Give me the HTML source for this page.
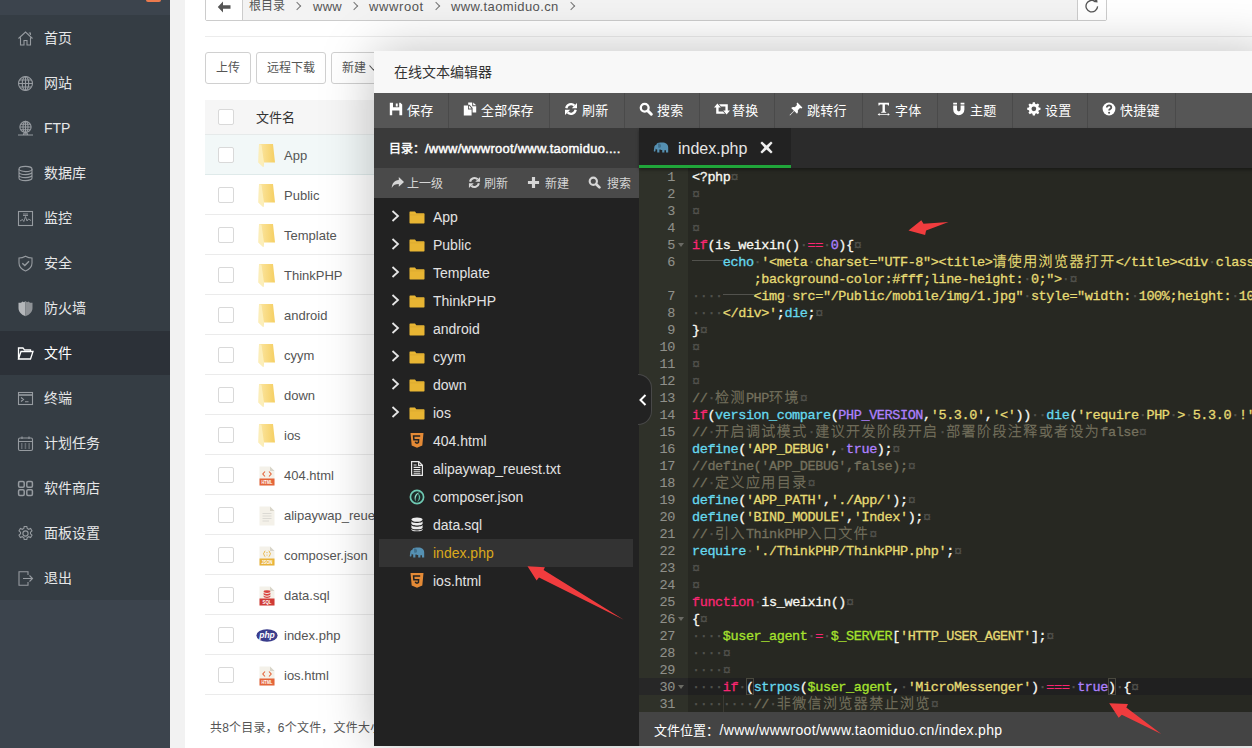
<!DOCTYPE html>
<html lang="zh-CN">
<head>
<meta charset="utf-8">
<title>文件管理</title>
<style>
*{box-sizing:border-box;margin:0;padding:0}
html,body{width:1252px;height:748px;overflow:hidden;background:#fff}
body{position:relative;font-family:"Liberation Sans","Noto Sans CJK SC",sans-serif;font-size:12px;color:#444}
.abs{position:absolute}
/* sidebar */
#side{position:absolute;left:0;top:0;width:170px;height:748px;background:#3c444d}
#side .hd{position:absolute;left:0;top:0;width:170px;height:15px;background:#3c444d}
#side .badge{position:absolute;left:146px;top:-4px;width:15px;height:6px;background:#ec7a4d;border-radius:2px}
#menu{position:absolute;left:0;top:15px;width:170px;height:585px;background:#353d44}
#menu .it{position:absolute;left:0;width:170px;height:45px;line-height:46px;color:#e6e7e8;font-size:14px;padding-left:44px;white-space:nowrap}
#menu .it.on{background:#2c3138;color:#fff;box-shadow:inset 0 1px 0 #353d44}
#menu .it svg{position:absolute;left:17px;top:15px;width:17px;height:17px;stroke:#969ba0;fill:none;stroke-width:1.1}
/* main */
#gap{position:absolute;left:170px;top:0;width:15px;height:748px;background:#f2f2f2}
#main{position:absolute;left:185px;top:0;width:1067px;height:748px;background:#fff}

































/*MAINCSS*/
.crumb{position:absolute;left:20px;top:-10px;width:902px;height:31px;border:1px solid #ccc;background:#f3f3f3;border-radius:2px}
.crumb .back{position:absolute;left:0;top:0;width:37px;height:29px;background:#fff;border-right:1px solid #ccc}
.crumb .back svg{position:absolute;left:11px;top:10px}
.crumb .path{position:absolute;left:0;top:0;height:29px;line-height:31px;font-size:12px;color:#555;white-space:nowrap}
.crumb .path span{position:absolute;top:0;font-size:13px}
.crumb .path span:first-child{font-size:12px}
.crumb .path i{position:absolute;width:6px;height:6px;border-top:1.3px solid #777;border-right:1.3px solid #777;transform:rotate(45deg);top:12px}
.crumb .ref{position:absolute;right:0;top:0;width:29px;height:29px;background:#fff;border-left:1px solid #ccc}
.crumb .ref svg{position:absolute;left:5px;top:6px}
.hr{position:absolute;left:20px;top:36px;width:1047px;height:1px;background:#ececec}
.btn{position:absolute;top:52px;height:32px;line-height:30px;border:1px solid #d0d0d0;border-radius:3px;background:#fff;color:#555;font-size:12px;text-align:center;white-space:nowrap}
.thead{position:absolute;left:20px;top:100px;width:1047px;height:35px;background:#f6f6f6;border-bottom:1px solid #e6eaea}
.thead .th{position:absolute;left:51px;top:0;line-height:35px;font-size:13px;color:#333}
.cb{position:absolute;left:13px;width:16px;height:16px;border:1px solid #d9d9d9;border-radius:2px;background:#fff}
.tr{position:absolute;left:20px;width:1047px;height:40px;border-bottom:1px solid #ebebeb}
.tr.hl{background:#f2f8f8;border-bottom-color:#dfeaea}
.tr .fi{position:absolute}
.tr .fn{position:absolute;left:79px;top:0;line-height:42px;font-size:13px;color:#555;white-space:nowrap}
.foot{position:absolute;left:25px;top:718px;line-height:21px;font-size:12px;letter-spacing:0.2px;color:#555;white-space:nowrap}
/*/MAINCSS*/



/*MODALCSS*/
#modal{position:absolute;left:374px;top:51px;width:900px;height:695px;background:#222;box-shadow:1px 1px 50px rgba(0,0,0,.26)}
#modal .ttl{position:absolute;left:0;top:0;width:900px;height:42px;background:#f8f8f8;line-height:42px;padding-left:20px;font-size:14px;color:#333}
.tbar{position:absolute;left:0;top:42px;width:900px;height:35px;background:#565656}
.tb{position:absolute;top:0;height:35px;border-right:1px solid #4a4a4a;color:#fff;font-size:13px;line-height:36px;white-space:nowrap}
.tb .gi{position:absolute;left:15px;top:9px}
.tb span{position:absolute;left:33px;top:0;letter-spacing:0.2px}
.lp{position:absolute;left:0;top:77px;width:265px;height:618px;background:#222}
.lp .dir{position:absolute;left:0;top:0;width:265px;height:40px;background:#3a3a3a;color:#fff;font-size:13px;line-height:42px;padding-left:15px;white-space:nowrap;font-weight:normal;-webkit-text-stroke:0.45px;letter-spacing:0.24px}
.lp .dir b{font-weight:normal;font-size:12px;letter-spacing:0;display:inline-block;width:36px;vertical-align:top}
.lp .sub{position:absolute;left:0;top:40px;width:265px;height:30px;background:#4a4a4a}
.sb{position:absolute;top:0;height:30px;line-height:33px;color:#d6d6d6;font-size:12px;white-space:nowrap}
.sb .gi{position:absolute;left:0;top:8px}
.sb span{position:absolute;left:16px;top:0}
.tree{position:absolute;left:0;top:70px;width:265px;height:547px}
.tn{position:absolute;left:5px;width:254px;height:28px;line-height:28px;color:#e2e2e2;font-size:14px;white-space:nowrap}
.tn.sel{background:#333;color:#dba91c}
.tn .ch{position:absolute;left:12px;top:7px}
.tn .ti{position:absolute;left:30px;top:8px}
.tn span{position:absolute;left:54px;top:0}
.tabs{position:absolute;left:265px;top:77px;width:635px;height:40px;background:#2b2b2b;box-shadow:0 2px 3px rgba(0,0,0,.35);z-index:3}
.tab{position:absolute;left:0;top:0;width:152px;height:40px;background:#222;border-bottom:3px solid #20a53a;color:#e6e6e6;font-size:15px;line-height:42px;white-space:nowrap}
.tab .te{position:absolute;left:14px;top:14px}
.tab span{position:absolute;left:39px;top:0;font-size:16px}
.tab .tx{position:absolute;left:121px;top:13px}
.handle{position:absolute;left:264px;top:323px;width:14px;height:51px;background:#222;border:1px solid #484848;border-left:none;border-radius:0 14px 14px 0;z-index:5}
.handle svg{position:absolute;left:1px;top:19px}
.status{position:absolute;left:265px;top:661px;width:635px;height:34px;background:#444;color:#fff;font-size:14px;line-height:36px;padding-left:15px;white-space:nowrap;z-index:4;letter-spacing:0.32px}
.status b{font-weight:normal;font-size:13px;letter-spacing:0;display:inline-block;width:65.5px}
/*/MODALCSS*/


/*EDCSS*/
.ed{position:absolute;left:265px;top:117px;width:635px;height:544px;background:#272822;overflow:hidden;font-family:"Liberation Mono","Noto Sans CJK SC",monospace;font-size:13.5px;line-height:17px;letter-spacing:-0.4px;color:#f8f8f2;-webkit-text-stroke:0.3px}
.gut{position:absolute;left:0;top:0;width:49px;height:544px;background:#2f3129;color:#8f908a}
.gl{position:relative;height:17px;line-height:19px;text-align:right;padding-right:13px;letter-spacing:-0.4px;font-size:13.5px;-webkit-text-stroke:0.1px}
.gl.act{background:#272727}
.gl em{position:absolute;right:4px;top:7px;width:0;height:0;border-left:3px solid transparent;border-right:3px solid transparent;border-top:4px solid #6a6a64}
.code{position:absolute;left:49px;top:0;width:586px;height:544px}
.code .ln span,.code .ln i,.code .ln b{position:relative;top:1px}
.ln{height:17px;padding-left:4px;white-space:pre}
.ln.act{background:#202020}
.ln i{font-style:normal;color:#52524d}
.ln u{display:inline-block;width:30.8px;height:1px;background:#52524d;vertical-align:4px;text-decoration:none}
.ln b{line-height:0;font-weight:300;font-size:14px;letter-spacing:1.4px;font-family:"Liberation Mono","Noto Sans CJK SC",monospace}
.w{color:#f8f8f2}.k{color:#f92672}.f{color:#66d9ef}.s{color:#e6db74}.n{color:#ae81ff}.v{color:#a6e22e}.c{color:#75715e}
.bk{position:absolute;width:8.2px;height:17px;border:1px solid #49483e}
.ig{position:absolute;width:1px;height:17px;background:#3b3a32}
/*/EDCSS*/
</style>
</head>
<body>
<div id="side">
<div class="hd"><div class="badge"></div></div>
<div id="menu">
<!--MENU-->
<div class="it" style="top:0px"><svg viewBox="0 0 17 17"><path d="M1.5 8.5 L8.5 2 L15.5 8.5 M3.5 7.5 V15 H7 V10.5 H10 V15 H13.5 V7.5 M11.8 3 h1.6 v2"/></svg>首页</div>
<div class="it" style="top:45px"><svg viewBox="0 0 17 17"><circle cx="8.5" cy="8.5" r="7"/><ellipse cx="8.5" cy="8.5" rx="3.2" ry="7"/><path d="M8.5 1.5 V15.5 M1.5 8.5 H15.5 M2.5 5 H14.5 M2.5 12 H14.5"/></svg>网站</div>
<div class="it" style="top:90px"><svg viewBox="0 0 17 17"><circle cx="8.5" cy="7" r="5.6"/><ellipse cx="8.5" cy="7" rx="2.5" ry="5.6"/><path d="M8.5 1.4 V12.6 M2.9 7 H14.1 M3.6 4.3 H13.4 M3.6 9.7 H13.4 M1 15 H16 M6.5 15 v-1.2 h4 v1.2"/></svg>FTP</div>
<div class="it" style="top:135px"><svg viewBox="0 0 17 17"><ellipse cx="8.5" cy="4" rx="6.5" ry="2.6"/><path d="M2 4 V13 C2 14.5 5 15.6 8.5 15.6 S15 14.5 15 13 V4 M2 7 C2 8.5 5 9.6 8.5 9.6 S15 8.5 15 7 M2 10 C2 11.5 5 12.6 8.5 12.6 S15 11.5 15 10"/></svg>数据库</div>
<div class="it" style="top:180px"><svg viewBox="0 0 17 17"><rect x="1.5" y="1.5" width="14" height="14"/><path d="M3 11 L5.5 9.5 L6.8 11.5 L8.5 6.5 L10 11 L11.5 9 L14 10.5 M6 4 H11 M6 5.5 H11" stroke-width="0.9"/></svg>监控</div>
<div class="it" style="top:225px"><svg viewBox="0 0 17 17"><path d="M8.5 1.2 C6 2.6 4 3 2 3 V8 C2 12 5 14.6 8.5 16 C12 14.6 15 12 15 8 V3 C13 3 11 2.6 8.5 1.2 Z"/><path d="M5.3 8.3 L7.8 10.6 L12 6.2" stroke-width="1.4"/></svg>安全</div>
<div class="it" style="top:270px"><svg viewBox="0 0 17 17"><path d="M8.5 1 L7 2.2 L5.5 1.4 L4 2.8 L1.5 2.8 V8 C1.5 12 4.5 14.8 8.5 16.2 Z" fill="#b4b7ba" stroke="none"/><path d="M8.5 1 L10 2.2 L11.5 1.4 L13 2.8 L15.5 2.8 V8 C15.5 12 12.5 14.8 8.5 16.2 Z" fill="#8e9296" stroke="none"/></svg>防火墙</div>
<div class="it on" style="top:315px"><svg viewBox="0 0 17 17"><path d="M1.5 14 V3 H6 L7.5 4.8 H13.5 V6.5 M1.5 14 L4 6.5 H16 L13.5 14 Z" stroke="#fff" stroke-width="1.3"/></svg>文件</div>
<div class="it" style="top:360px"><svg viewBox="0 0 17 17"><rect x="1.5" y="2.5" width="14" height="12"/><path d="M1.5 5 H15.5" stroke-width="1.6"/><path d="M4 7.5 L6.5 9.5 L4 11.5 M8 11.8 H11.5"/></svg>终端</div>
<div class="it" style="top:405px"><svg viewBox="0 0 17 17"><rect x="1.5" y="3" width="14" height="12.5" rx="1.5"/><path d="M1.5 6.5 H15.5 M5 1.5 V4 M12 1.5 V4"/><path d="M4 9 h1.5 M7.7 9 h1.5 M11.4 9 h1.5 M4 11 h1.5 M7.7 11 h1.5 M11.4 11 h1.5 M4 13 h1.5 M7.7 13 h1.5 M11.4 13 h1.5" stroke-width="1"/></svg>计划任务</div>
<div class="it" style="top:450px"><svg viewBox="0 0 17 17"><rect x="1.6" y="1.6" width="5.6" height="5.6" rx="1.2" stroke-width="1.5"/><rect x="9.8" y="1.6" width="5.6" height="5.6" rx="1.2" stroke-width="1.5"/><rect x="1.6" y="9.8" width="5.6" height="5.6" rx="1.2" stroke-width="1.5"/><rect x="9.8" y="9.8" width="5.6" height="5.6" rx="1.2" stroke-width="1.5"/></svg>软件商店</div>
<div class="it" style="top:495px"><svg viewBox="0 0 17 17"><circle cx="8.5" cy="8.5" r="2.6"/><path d="M7.2 1.5 h2.6 l0.4 2 l1.5 0.8 l1.9 -0.8 l1.4 2.3 l-1.5 1.4 v1.6 l1.5 1.4 l-1.4 2.3 l-1.9 -0.8 l-1.5 0.8 l-0.4 2 h-2.6 l-0.4 -2 l-1.5 -0.8 l-1.9 0.8 l-1.4 -2.3 l1.5 -1.4 v-1.6 l-1.5 -1.4 l1.4 -2.3 l1.9 0.8 l1.5 -0.8 Z"/></svg>面板设置</div>
<div class="it" style="top:540px"><svg viewBox="0 0 17 17"><path d="M11 5 V1.8 H2 V15.2 H11 V12 M6 8.5 H15.5 M12.5 5.5 L15.5 8.5 L12.5 11.5"/></svg>退出</div>
<!--/MENU-->
</div>
</div>
<div id="gap"></div>
<div id="main">
<!--MAIN-->
<div class="crumb"><div class="back"><svg width="14" height="12" viewBox="0 0 14 12"><path d="M6 0.5 L0.8 6 L6 11.5 V7.8 H13.5 V4.2 H6 Z" fill="#555"/></svg></div><div class="path"><span style="left:43px">根目录</span><i style="left:88px"></i><span style="left:107px;letter-spacing:0.25px">www</span><i style="left:145px"></i><span style="left:163px;letter-spacing:0.6px">wwwroot</span><i style="left:227px"></i><span style="left:245px;letter-spacing:0.39px">www.taomiduo.cn</span><i style="left:362px"></i></div><div class="ref"><svg width="18" height="18" viewBox="0 0 18 18"><path d="M14.6 9.4 A5.8 5.8 0 1 1 12.4 4.6" fill="none" stroke="#555" stroke-width="1.3"/><path d="M10.2 4.9 L14.6 5.6 L14 1.2 Z" fill="#555"/></svg></div></div>
<div class="hr"></div>
<div class="btn" style="left:20px;width:46px">上传</div><div class="btn" style="left:71px;width:70px">远程下载</div><div class="btn" style="left:146px;width:90px;text-align:left;padding-left:10px">新建<svg width="9" height="6" viewBox="0 0 9 6" style="margin-left:3px;vertical-align:1px"><path d="M0.5 0.5 L4.5 5 L8.5 0.5" fill="none" stroke="#555" stroke-width="1.1"/></svg></div>
<div class="thead"><span class="cb" style="top:9px"></span><span class="th">文件名</span></div>
<div class="tr hl" style="top:135px"><span class="cb" style="top:12px"></span><svg class="fi" style="left:53px;top:9px" width="17" height="23" viewBox="0 0 17 23"><defs><linearGradient id="fg0" x1="0" y1="0" x2="1" y2="0"><stop offset="0" stop-color="#fbe7a6"/><stop offset="0.45" stop-color="#f9dc86"/><stop offset="1" stop-color="#f5cf63"/></linearGradient></defs><path d="M1 0 H15 L17 18.5 H6 L5.3 23 L0.5 18.5 Z" fill="url(#fg0)"/><path d="M1 0 L3.5 1 L6 18.5 L5.3 23 L0.5 18.5 Z" fill="#fceeb9"/></svg><span class="fn">App</span></div>
<div class="tr" style="top:175px"><span class="cb" style="top:12px"></span><svg class="fi" style="left:53px;top:9px" width="17" height="23" viewBox="0 0 17 23"><defs><linearGradient id="fg1" x1="0" y1="0" x2="1" y2="0"><stop offset="0" stop-color="#fbe7a6"/><stop offset="0.45" stop-color="#f9dc86"/><stop offset="1" stop-color="#f5cf63"/></linearGradient></defs><path d="M1 0 H15 L17 18.5 H6 L5.3 23 L0.5 18.5 Z" fill="url(#fg1)"/><path d="M1 0 L3.5 1 L6 18.5 L5.3 23 L0.5 18.5 Z" fill="#fceeb9"/></svg><span class="fn">Public</span></div>
<div class="tr" style="top:215px"><span class="cb" style="top:12px"></span><svg class="fi" style="left:53px;top:9px" width="17" height="23" viewBox="0 0 17 23"><defs><linearGradient id="fg2" x1="0" y1="0" x2="1" y2="0"><stop offset="0" stop-color="#fbe7a6"/><stop offset="0.45" stop-color="#f9dc86"/><stop offset="1" stop-color="#f5cf63"/></linearGradient></defs><path d="M1 0 H15 L17 18.5 H6 L5.3 23 L0.5 18.5 Z" fill="url(#fg2)"/><path d="M1 0 L3.5 1 L6 18.5 L5.3 23 L0.5 18.5 Z" fill="#fceeb9"/></svg><span class="fn">Template</span></div>
<div class="tr" style="top:255px"><span class="cb" style="top:12px"></span><svg class="fi" style="left:53px;top:9px" width="17" height="23" viewBox="0 0 17 23"><defs><linearGradient id="fg3" x1="0" y1="0" x2="1" y2="0"><stop offset="0" stop-color="#fbe7a6"/><stop offset="0.45" stop-color="#f9dc86"/><stop offset="1" stop-color="#f5cf63"/></linearGradient></defs><path d="M1 0 H15 L17 18.5 H6 L5.3 23 L0.5 18.5 Z" fill="url(#fg3)"/><path d="M1 0 L3.5 1 L6 18.5 L5.3 23 L0.5 18.5 Z" fill="#fceeb9"/></svg><span class="fn">ThinkPHP</span></div>
<div class="tr" style="top:295px"><span class="cb" style="top:12px"></span><svg class="fi" style="left:53px;top:9px" width="17" height="23" viewBox="0 0 17 23"><defs><linearGradient id="fg4" x1="0" y1="0" x2="1" y2="0"><stop offset="0" stop-color="#fbe7a6"/><stop offset="0.45" stop-color="#f9dc86"/><stop offset="1" stop-color="#f5cf63"/></linearGradient></defs><path d="M1 0 H15 L17 18.5 H6 L5.3 23 L0.5 18.5 Z" fill="url(#fg4)"/><path d="M1 0 L3.5 1 L6 18.5 L5.3 23 L0.5 18.5 Z" fill="#fceeb9"/></svg><span class="fn">android</span></div>
<div class="tr" style="top:335px"><span class="cb" style="top:12px"></span><svg class="fi" style="left:53px;top:9px" width="17" height="23" viewBox="0 0 17 23"><defs><linearGradient id="fg5" x1="0" y1="0" x2="1" y2="0"><stop offset="0" stop-color="#fbe7a6"/><stop offset="0.45" stop-color="#f9dc86"/><stop offset="1" stop-color="#f5cf63"/></linearGradient></defs><path d="M1 0 H15 L17 18.5 H6 L5.3 23 L0.5 18.5 Z" fill="url(#fg5)"/><path d="M1 0 L3.5 1 L6 18.5 L5.3 23 L0.5 18.5 Z" fill="#fceeb9"/></svg><span class="fn">cyym</span></div>
<div class="tr" style="top:375px"><span class="cb" style="top:12px"></span><svg class="fi" style="left:53px;top:9px" width="17" height="23" viewBox="0 0 17 23"><defs><linearGradient id="fg6" x1="0" y1="0" x2="1" y2="0"><stop offset="0" stop-color="#fbe7a6"/><stop offset="0.45" stop-color="#f9dc86"/><stop offset="1" stop-color="#f5cf63"/></linearGradient></defs><path d="M1 0 H15 L17 18.5 H6 L5.3 23 L0.5 18.5 Z" fill="url(#fg6)"/><path d="M1 0 L3.5 1 L6 18.5 L5.3 23 L0.5 18.5 Z" fill="#fceeb9"/></svg><span class="fn">down</span></div>
<div class="tr" style="top:415px"><span class="cb" style="top:12px"></span><svg class="fi" style="left:53px;top:9px" width="17" height="23" viewBox="0 0 17 23"><defs><linearGradient id="fg7" x1="0" y1="0" x2="1" y2="0"><stop offset="0" stop-color="#fbe7a6"/><stop offset="0.45" stop-color="#f9dc86"/><stop offset="1" stop-color="#f5cf63"/></linearGradient></defs><path d="M1 0 H15 L17 18.5 H6 L5.3 23 L0.5 18.5 Z" fill="url(#fg7)"/><path d="M1 0 L3.5 1 L6 18.5 L5.3 23 L0.5 18.5 Z" fill="#fceeb9"/></svg><span class="fn">ios</span></div>
<div class="tr" style="top:455px"><span class="cb" style="top:12px"></span><svg class="fi" style="left:54px;top:11px" width="16" height="20" viewBox="0 0 16 20"><path d="M0.5 0.5 H11 L15.5 5 V19.5 H0.5 Z" fill="#f4f1e9"/><path d="M11 0.5 V5 H15.5 Z" fill="#d9d5c9"/><rect x="0.5" y="12.5" width="15" height="7" fill="#e4653a"/><text x="8" y="18.2" font-size="5.5" font-weight="bold" fill="#fff" text-anchor="middle" font-family="Liberation Sans,sans-serif" textLength="11" lengthAdjust="spacingAndGlyphs">HTML</text><path d="M6 5.5 L3.8 8 L6 10.5 M10 5.5 L12.2 8 L10 10.5" stroke="#e4653a" stroke-width="1.1" fill="none"/></svg><span class="fn">404.html</span></div>
<div class="tr" style="top:495px"><span class="cb" style="top:12px"></span><svg class="fi" style="left:54px;top:11px" width="16" height="20" viewBox="0 0 16 20"><path d="M0.5 0.5 H11 L15.5 5 V19.5 H0.5 Z" fill="#f4f1e9"/><path d="M11 0.5 V5 H15.5 Z" fill="#d9d5c9"/><path d="M3.5 7.5 H12.5 M3.5 10 H12.5 M3.5 12.5 H12.5 M3.5 15 H10" stroke="#dcdad4" stroke-width="1"/></svg><span class="fn">alipaywap_reuest.txt</span></div>
<div class="tr" style="top:535px"><span class="cb" style="top:12px"></span><svg class="fi" style="left:54px;top:11px" width="16" height="20" viewBox="0 0 16 20"><path d="M0.5 0.5 H11 L15.5 5 V19.5 H0.5 Z" fill="#f4f1e9"/><path d="M11 0.5 V5 H15.5 Z" fill="#d9d5c9"/><rect x="0.5" y="12.5" width="15" height="7" fill="#e9b33b"/><text x="8" y="18.2" font-size="5.5" font-weight="bold" fill="#fff" text-anchor="middle" font-family="Liberation Sans,sans-serif" textLength="11" lengthAdjust="spacingAndGlyphs">JSON</text><path d="M6.3 5 C5 5 5.6 7.4 4.4 7.8 C5.6 8.2 5 10.6 6.3 10.6 M9.7 5 C11 5 10.4 7.4 11.6 7.8 C10.4 8.2 11 10.6 9.7 10.6" stroke="#e9b33b" stroke-width="1" fill="none"/><circle cx="8" cy="6.6" r="0.6" fill="#e9b33b"/><circle cx="8" cy="9" r="0.6" fill="#e9b33b"/></svg><span class="fn">composer.json</span></div>
<div class="tr" style="top:575px"><span class="cb" style="top:12px"></span><svg class="fi" style="left:54px;top:11px" width="16" height="20" viewBox="0 0 16 20"><path d="M0.5 0.5 H11 L15.5 5 V19.5 H0.5 Z" fill="#f4f1e9"/><path d="M11 0.5 V5 H15.5 Z" fill="#d9d5c9"/><rect x="0.5" y="12.5" width="15" height="7" fill="#d03b36"/><text x="8" y="18.2" font-size="5.5" font-weight="bold" fill="#fff" text-anchor="middle" font-family="Liberation Sans,sans-serif" textLength="9" lengthAdjust="spacingAndGlyphs">SQL</text><ellipse cx="8" cy="5.6" rx="3.4" ry="1.4" fill="#d9443f"/><path d="M4.6 6.6 c0 1.9 6.8 1.9 6.8 0 v1.6 c0 1.9 -6.8 1.9 -6.8 0 Z M4.6 9.2 c0 1.9 6.8 1.9 6.8 0 v1.4 c0 1.9 -6.8 1.9 -6.8 0 Z" fill="#d9443f"/></svg><span class="fn">data.sql</span></div>
<div class="tr" style="top:615px"><span class="cb" style="top:12px"></span><svg class="fi" style="left:51px;top:14px" width="22" height="13" viewBox="0 0 22 13"><ellipse cx="11" cy="6.5" rx="10.6" ry="6.2" fill="#3a3d8c"/><text x="11" y="9.3" font-size="8.5" font-weight="bold" font-style="italic" fill="#fff" text-anchor="middle" font-family="Liberation Sans,sans-serif">php</text></svg><span class="fn">index.php</span></div>
<div class="tr" style="top:655px"><span class="cb" style="top:12px"></span><svg class="fi" style="left:54px;top:11px" width="16" height="20" viewBox="0 0 16 20"><path d="M0.5 0.5 H11 L15.5 5 V19.5 H0.5 Z" fill="#f4f1e9"/><path d="M11 0.5 V5 H15.5 Z" fill="#d9d5c9"/><rect x="0.5" y="12.5" width="15" height="7" fill="#e4653a"/><text x="8" y="18.2" font-size="5.5" font-weight="bold" fill="#fff" text-anchor="middle" font-family="Liberation Sans,sans-serif" textLength="11" lengthAdjust="spacingAndGlyphs">HTML</text><path d="M6 5.5 L3.8 8 L6 10.5 M10 5.5 L12.2 8 L10 10.5" stroke="#e4653a" stroke-width="1.1" fill="none"/></svg><span class="fn">ios.html</span></div>
<div class="foot">共8个目录，6个文件，文件大小：<span>点击计算</span></div>
<!--/MAIN-->
</div>
<!--MODAL-->
<div id="modal">
<div class="ttl">在线文本编辑器</div>
<div class="tbar">
<div class="tb" style="left:0px;width:75px"><svg class="gi" width="14" height="14" viewBox="0 0 14 14"><path d="M0.8 0.8 H11.4 L13.2 2.6 V13.2 H0.8 Z M4 0.8 V5.2 H10.2 V0.8 Z M3.2 8.6 V13.2 H10.4 V8.6 Z" fill="#fff" fill-rule="evenodd"/><rect x="6.8" y="1.5" width="1.9" height="3" fill="#fff"/></svg><span>保存</span></div>
<div class="tb" style="left:74px;width:102px"><svg class="gi" width="14" height="14" viewBox="0 0 14 14"><path d="M0.8 3.6 H5 V7.4 H8.6 V13.4 H0.8 Z" fill="#fff"/><path d="M5.9 3.6 L8.6 6.5 H5.9 Z" fill="#fff"/><path d="M5.2 0.6 H9.2 V4.2 H13.2 V10.6 H9.6 V6 L6.6 2.8 H5.2 Z" fill="#fff"/><path d="M10.2 0.6 L13.2 3.3 H10.2 Z" fill="#fff"/></svg><span>全部保存</span></div>
<div class="tb" style="left:175px;width:76px"><svg class="gi" width="14" height="14" viewBox="0 0 14 14"><path d="M2.3 6.2 A4.8 4.8 0 0 1 10.4 3.6" fill="none" stroke="#fff" stroke-width="2.3"/><path d="M13 1 V6.2 H7.8 Z" fill="#fff"/><path d="M11.7 7.8 A4.8 4.8 0 0 1 3.6 10.4" fill="none" stroke="#fff" stroke-width="2.3"/><path d="M1 13 V7.8 H6.2 Z" fill="#fff"/></svg><span>刷新</span></div>
<div class="tb" style="left:250px;width:76px"><svg class="gi" width="14" height="14" viewBox="0 0 14 14"><circle cx="5.7" cy="5.7" r="3.9" fill="none" stroke="#fff" stroke-width="2.3"/><path d="M8.9 8.9 L12.3 12.3" stroke="#fff" stroke-width="2.9" stroke-linecap="round"/></svg><span>搜索</span></div>
<div class="tb" style="left:325px;width:76px"><svg class="gi" width="16" height="14" viewBox="0 0 16 14"><path d="M3.4 1.4 L6.8 5.4 H4.6 V9.4 H9 L11 11.8 H2.2 V5.4 H0 Z" fill="#fff"/><path d="M12.6 12.6 L9.2 8.6 H11.4 V4.6 H7 L5 2.2 H13.8 V8.6 H16 Z" fill="#fff"/></svg><span>替换</span></div>
<div class="tb" style="left:400px;width:89px"><svg class="gi" width="14" height="14" viewBox="0 0 14 14"><path d="M8.4 0.6 L13.4 5.6 L12.4 6.4 L11 6 L8.8 8.2 C9.2 9.6 8.9 10.9 8 11.8 L5.3 9.1 L1 13.4 L0.6 13 L4.9 8.7 L2.2 6 C3.1 5.1 4.4 4.8 5.8 5.2 L8 3 L7.6 1.6 Z" fill="#fff"/></svg><span>跳转行</span></div>
<div class="tb" style="left:488px;width:76px"><svg class="gi" width="14" height="14" viewBox="0 0 14 14"><path d="M1.4 0.8 H12 V3.6 H11 C10.8 2.8 10.6 2.5 9.8 2.5 H7.9 V9 C7.9 9.7 8.2 9.8 9.2 9.9 V10.7 H4.2 V9.9 C5.2 9.8 5.5 9.7 5.5 9 V2.5 H3.6 C2.8 2.5 2.6 2.8 2.4 3.6 H1.4 Z" fill="#fff"/><path d="M0.6 12.4 L2.6 11 V12 H10.8 V11 L12.8 12.4 L10.8 13.8 V12.8 H2.6 V13.8 Z" fill="#fff"/></svg><span>字体</span></div>
<div class="tb" style="left:563px;width:76px"><svg class="gi" width="14" height="14" viewBox="0 0 14 14"><path d="M1.2 0.8 H5 V2.6 H1.2 Z M8.6 0.8 H12.4 V2.6 H8.6 Z M1.2 3.6 H5 V7.6 A1.8 1.8 0 0 0 8.6 7.6 V3.6 H12.4 V7.6 A5.6 5.6 0 0 1 1.2 7.6 Z" fill="#fff"/></svg><span>主题</span></div>
<div class="tb" style="left:638px;width:76px"><svg class="gi" width="14" height="14" viewBox="0 0 14 14"><path d="M5.9 0.6 H8.1 L8.5 2.4 L9.6 2.9 L11.2 1.9 L12.7 3.4 L11.7 5 L12.2 6.1 L14 6.5 V8.7 L12.2 9.1 L11.7 10.2 L12.7 11.8 L11.2 13.3 L9.6 12.3 L8.5 12.8 L8.1 14.6 H5.9 L5.5 12.8 L4.4 12.3 L2.8 13.3 L1.3 11.8 L2.3 10.2 L1.8 9.1 L0 8.7 V6.5 L1.8 6.1 L2.3 5 L1.3 3.4 L2.8 1.9 L4.4 2.9 L5.5 2.4 Z M7 5.1 A2.5 2.5 0 1 0 7 10.1 A2.5 2.5 0 1 0 7 5.1 Z" fill="#fff" fill-rule="evenodd" transform="translate(0.2,-0.4) scale(0.95)"/></svg><span>设置</span></div>
<div class="tb" style="left:713px;width:89px"><svg class="gi" width="14" height="14" viewBox="0 0 14 14"><circle cx="7" cy="7" r="6.4" fill="#fff"/><path d="M4.8 5.4 C4.8 2.8 9.3 2.8 9.3 5.5 C9.3 7 7.1 7.1 7.1 8.6" fill="none" stroke="#565656" stroke-width="1.8"/><circle cx="7.1" cy="10.7" r="1.05" fill="#565656"/></svg><span>快捷键</span></div>
</div>
<div class="lp">
<div class="dir"><b>目录：</b>/www/wwwroot/www.taomiduo....</div>
<div class="sub">
<div class="sb" style="left:17px"><svg class="gi" width="13" height="13" viewBox="0 0 14 14"><path d="M8.4 1.2 L14 6.4 L8.4 11.6 V8.6 C4.8 8.6 2.6 9.6 0.8 12.8 C1 8 3.6 4.6 8.4 4.2 Z" fill="#d6d6d6"/></svg><span style="left:16px">上一级</span></div>
<div class="sb" style="left:94px"><svg class="gi" width="13" height="13" viewBox="0 0 14 14"><path d="M2.3 6.2 A4.8 4.8 0 0 1 10.4 3.6" fill="none" stroke="#d6d6d6" stroke-width="2.3"/><path d="M13 1 V6.2 H7.8 Z" fill="#d6d6d6"/><path d="M11.7 7.8 A4.8 4.8 0 0 1 3.6 10.4" fill="none" stroke="#d6d6d6" stroke-width="2.3"/><path d="M1 13 V7.8 H6.2 Z" fill="#d6d6d6"/></svg><span style="left:16px">刷新</span></div>
<div class="sb" style="left:153px"><svg class="gi" width="13" height="13" viewBox="0 0 14 14"><path d="M5.3 1 H8.7 V5.3 H13 V8.7 H8.7 V13 H5.3 V8.7 H1 V5.3 H5.3 Z" fill="#d6d6d6"/></svg><span style="left:18px">新建</span></div>
<div class="sb" style="left:214px"><svg class="gi" width="13" height="13" viewBox="0 0 14 14"><circle cx="5.7" cy="5.7" r="3.9" fill="none" stroke="#d6d6d6" stroke-width="2.3"/><path d="M8.9 8.9 L12.3 12.3" stroke="#d6d6d6" stroke-width="2.9" stroke-linecap="round"/></svg><span style="left:19px">搜索</span></div>
</div>
<div class="tree">
<div class="tn" style="top:5px"><svg class="ch" width="9" height="12" viewBox="0 0 9 12"><path d="M1.5 1 L7 6 L1.5 11" fill="none" stroke="#e6e6e6" stroke-width="1.8"/></svg><svg class="ti" width="16" height="13" viewBox="0 0 16 13"><path d="M0.5 1.2 Q0.5 0.5 1.2 0.5 H6 L7.3 2.2 H14.8 Q15.5 2.2 15.5 2.9 V11.8 Q15.5 12.5 14.8 12.5 H1.2 Q0.5 12.5 0.5 11.8 Z" fill="#e8b533"/><path d="M0.5 3.6 H15.5 V4.2 H0.5 Z" fill="#c9982a" opacity=".55"/></svg><span>App</span></div>
<div class="tn" style="top:33px"><svg class="ch" width="9" height="12" viewBox="0 0 9 12"><path d="M1.5 1 L7 6 L1.5 11" fill="none" stroke="#e6e6e6" stroke-width="1.8"/></svg><svg class="ti" width="16" height="13" viewBox="0 0 16 13"><path d="M0.5 1.2 Q0.5 0.5 1.2 0.5 H6 L7.3 2.2 H14.8 Q15.5 2.2 15.5 2.9 V11.8 Q15.5 12.5 14.8 12.5 H1.2 Q0.5 12.5 0.5 11.8 Z" fill="#e8b533"/><path d="M0.5 3.6 H15.5 V4.2 H0.5 Z" fill="#c9982a" opacity=".55"/></svg><span>Public</span></div>
<div class="tn" style="top:61px"><svg class="ch" width="9" height="12" viewBox="0 0 9 12"><path d="M1.5 1 L7 6 L1.5 11" fill="none" stroke="#e6e6e6" stroke-width="1.8"/></svg><svg class="ti" width="16" height="13" viewBox="0 0 16 13"><path d="M0.5 1.2 Q0.5 0.5 1.2 0.5 H6 L7.3 2.2 H14.8 Q15.5 2.2 15.5 2.9 V11.8 Q15.5 12.5 14.8 12.5 H1.2 Q0.5 12.5 0.5 11.8 Z" fill="#e8b533"/><path d="M0.5 3.6 H15.5 V4.2 H0.5 Z" fill="#c9982a" opacity=".55"/></svg><span>Template</span></div>
<div class="tn" style="top:89px"><svg class="ch" width="9" height="12" viewBox="0 0 9 12"><path d="M1.5 1 L7 6 L1.5 11" fill="none" stroke="#e6e6e6" stroke-width="1.8"/></svg><svg class="ti" width="16" height="13" viewBox="0 0 16 13"><path d="M0.5 1.2 Q0.5 0.5 1.2 0.5 H6 L7.3 2.2 H14.8 Q15.5 2.2 15.5 2.9 V11.8 Q15.5 12.5 14.8 12.5 H1.2 Q0.5 12.5 0.5 11.8 Z" fill="#e8b533"/><path d="M0.5 3.6 H15.5 V4.2 H0.5 Z" fill="#c9982a" opacity=".55"/></svg><span>ThinkPHP</span></div>
<div class="tn" style="top:117px"><svg class="ch" width="9" height="12" viewBox="0 0 9 12"><path d="M1.5 1 L7 6 L1.5 11" fill="none" stroke="#e6e6e6" stroke-width="1.8"/></svg><svg class="ti" width="16" height="13" viewBox="0 0 16 13"><path d="M0.5 1.2 Q0.5 0.5 1.2 0.5 H6 L7.3 2.2 H14.8 Q15.5 2.2 15.5 2.9 V11.8 Q15.5 12.5 14.8 12.5 H1.2 Q0.5 12.5 0.5 11.8 Z" fill="#e8b533"/><path d="M0.5 3.6 H15.5 V4.2 H0.5 Z" fill="#c9982a" opacity=".55"/></svg><span>android</span></div>
<div class="tn" style="top:145px"><svg class="ch" width="9" height="12" viewBox="0 0 9 12"><path d="M1.5 1 L7 6 L1.5 11" fill="none" stroke="#e6e6e6" stroke-width="1.8"/></svg><svg class="ti" width="16" height="13" viewBox="0 0 16 13"><path d="M0.5 1.2 Q0.5 0.5 1.2 0.5 H6 L7.3 2.2 H14.8 Q15.5 2.2 15.5 2.9 V11.8 Q15.5 12.5 14.8 12.5 H1.2 Q0.5 12.5 0.5 11.8 Z" fill="#e8b533"/><path d="M0.5 3.6 H15.5 V4.2 H0.5 Z" fill="#c9982a" opacity=".55"/></svg><span>cyym</span></div>
<div class="tn" style="top:173px"><svg class="ch" width="9" height="12" viewBox="0 0 9 12"><path d="M1.5 1 L7 6 L1.5 11" fill="none" stroke="#e6e6e6" stroke-width="1.8"/></svg><svg class="ti" width="16" height="13" viewBox="0 0 16 13"><path d="M0.5 1.2 Q0.5 0.5 1.2 0.5 H6 L7.3 2.2 H14.8 Q15.5 2.2 15.5 2.9 V11.8 Q15.5 12.5 14.8 12.5 H1.2 Q0.5 12.5 0.5 11.8 Z" fill="#e8b533"/><path d="M0.5 3.6 H15.5 V4.2 H0.5 Z" fill="#c9982a" opacity=".55"/></svg><span>down</span></div>
<div class="tn" style="top:201px"><svg class="ch" width="9" height="12" viewBox="0 0 9 12"><path d="M1.5 1 L7 6 L1.5 11" fill="none" stroke="#e6e6e6" stroke-width="1.8"/></svg><svg class="ti" width="16" height="13" viewBox="0 0 16 13"><path d="M0.5 1.2 Q0.5 0.5 1.2 0.5 H6 L7.3 2.2 H14.8 Q15.5 2.2 15.5 2.9 V11.8 Q15.5 12.5 14.8 12.5 H1.2 Q0.5 12.5 0.5 11.8 Z" fill="#e8b533"/><path d="M0.5 3.6 H15.5 V4.2 H0.5 Z" fill="#c9982a" opacity=".55"/></svg><span>ios</span></div>
<div class="tn" style="top:229px"><svg class="ti" width="16" height="15" viewBox="0 0 16 15" style="top:6px"><path d="M1.5 0 H14.5 L13.3 12.6 L8 14.8 L2.7 12.6 Z" fill="#e48a36"/><path d="M11.2 3 H4.6 L4.9 6.8 H9.6 L9.4 9.6 L8 10.2 L6.6 9.6 L6.5 8.6" fill="none" stroke="#222" stroke-width="1.5"/></svg><span>404.html</span></div>
<div class="tn" style="top:257px"><svg class="ti" width="16" height="15" viewBox="0 0 16 15" style="top:6px"><path d="M2.6 0.7 H9.8 L13.4 4.2 V14.3 H2.6 Z" fill="none" stroke="#e8e8e8" stroke-width="1.2"/><path d="M9.6 0.7 V4.4 H13.4" fill="none" stroke="#e8e8e8" stroke-width="1.1"/><path d="M4.6 6.4 H11.4 M4.6 8.6 H11.4 M4.6 10.8 H11.4 M4.6 12.8 H11.4 M4.6 4 H7.6" stroke="#e8e8e8" stroke-width="1.1"/></svg><span>alipaywap_reuest.txt</span></div>
<div class="tn" style="top:285px"><svg class="ti" width="16" height="16" viewBox="0 0 16 16" style="top:6px"><circle cx="8" cy="8" r="6.6" fill="#1d2b29" stroke="#6fc9b3" stroke-width="1.7"/><path d="M10.8 3.4 C6 3.6 4.2 8.6 6.8 12.6 C6 8.8 7.4 5.4 10.8 3.4 Z" fill="#8fe0cd"/><path d="M9 4.6 C12.2 6.6 12 11 8.2 13 C10.2 10.4 10.4 7.4 9 4.6 Z" fill="#5dbba4"/></svg><span>composer.json</span></div>
<div class="tn" style="top:313px"><svg class="ti" width="16" height="15" viewBox="0 0 16 15" style="top:6px"><ellipse cx="8" cy="2.6" rx="5.6" ry="2.2" fill="#ececec"/><path d="M2.4 4 c0 2.6 11.2 2.6 11.2 0 v2.6 c0 2.6 -11.2 2.6 -11.2 0 Z M2.4 7.8 c0 2.6 11.2 2.6 11.2 0 v2.6 c0 2.6 -11.2 2.6 -11.2 0 Z M2.4 11.6 c0 2.6 11.2 2.6 11.2 0 v0.8 c0 2.6 -11.2 2.6 -11.2 0 Z" fill="#ececec"/></svg><span>data.sql</span></div>
<div class="tn sel" style="top:341px"><svg class="ti" width="16" height="12" viewBox="0 0 16 12" style="top:8px"><path d="M3.2 3 C3.6 0.8 6.4 0.2 8.6 0.6 C12.4 0.4 15.2 2 15.2 5.4 V10.6 H13 V8.2 H11.4 V10.6 H9.2 V8 C8 8 7 7.8 6.4 7.2 V10.6 H4.2 V7.4 C3.4 7.4 3 7 2.8 6.4 L2.4 9 C2.2 10 0.6 9.8 0.8 8.8 L1.4 4.6 C1.6 3.6 2.4 3 3.2 3 Z" fill="#5590b2"/><path d="M5 1.6 C7 1 8.4 2.6 8 4.6 C7.6 6 6 6.2 5.2 5.4 Z" fill="#41708c"/></svg><span>index.php</span></div>
<div class="tn" style="top:369px"><svg class="ti" width="16" height="15" viewBox="0 0 16 15" style="top:6px"><path d="M1.5 0 H14.5 L13.3 12.6 L8 14.8 L2.7 12.6 Z" fill="#e48a36"/><path d="M11.2 3 H4.6 L4.9 6.8 H9.6 L9.4 9.6 L8 10.2 L6.6 9.6 L6.5 8.6" fill="none" stroke="#222" stroke-width="1.5"/></svg><span>ios.html</span></div>
</div></div>
<div class="tabs"><div class="tab"><svg class="te" width="16" height="12" viewBox="0 0 16 12" ><path d="M3.2 3 C3.6 0.8 6.4 0.2 8.6 0.6 C12.4 0.4 15.2 2 15.2 5.4 V10.6 H13 V8.2 H11.4 V10.6 H9.2 V8 C8 8 7 7.8 6.4 7.2 V10.6 H4.2 V7.4 C3.4 7.4 3 7 2.8 6.4 L2.4 9 C2.2 10 0.6 9.8 0.8 8.8 L1.4 4.6 C1.6 3.6 2.4 3 3.2 3 Z" fill="#5590b2"/><path d="M5 1.6 C7 1 8.4 2.6 8 4.6 C7.6 6 6 6.2 5.2 5.4 Z" fill="#41708c"/></svg><span>index.php</span><svg class="tx" width="13" height="13" viewBox="0 0 13 13"><path d="M2 0.4 L6.5 4.4 L11 0.4 L12.6 2 L8.6 6.5 L12.6 11 L11 12.6 L6.5 8.6 L2 12.6 L0.4 11 L4.4 6.5 L0.4 2 Z" fill="#eee"/></svg></div></div>
<!--EDITOR--><div class="ed"><div class="gut"><div class="gl">1</div><div class="gl">2</div><div class="gl">3</div><div class="gl">4</div><div class="gl">5<em></em></div><div class="gl">6</div><div class="gl"></div><div class="gl">7</div><div class="gl">8</div><div class="gl">9</div><div class="gl">10</div><div class="gl">11</div><div class="gl">12</div><div class="gl">13</div><div class="gl">14</div><div class="gl">15</div><div class="gl">16</div><div class="gl">17</div><div class="gl">18</div><div class="gl">19</div><div class="gl">20</div><div class="gl">21</div><div class="gl">22</div><div class="gl">23</div><div class="gl">24</div><div class="gl">25</div><div class="gl">26<em></em></div><div class="gl">27</div><div class="gl">28</div><div class="gl">29</div><div class="gl act">30<em></em></div><div class="gl">31</div></div><div class="code"><div class="ln"><span class="w">&lt;?php</span><i>¤</i></div><div class="ln"><i>¤</i></div><div class="ln"><i>¤</i></div><div class="ln"><i>¤</i></div><div class="ln"><span class="k">if</span><span class="w">(is_weixin()</span><i>·</i><span class="k">==</span><i>·</i><span class="n">0</span><span class="w">){</span><i>¤</i></div><div class="ln"><u></u><span class="f">echo</span><i>·</i><span class="s">'&lt;meta</span><i>·</i><span class="s">charset="UTF-8"&gt;&lt;title&gt;</span><b class="s">请</b><b class="s">使</b><b class="s">用</b><b class="s">浏</b><b class="s">览</b><b class="s">器</b><b class="s">打</b><b class="s">开</b><span class="s">&lt;/title&gt;&lt;div</span><i>·</i><span class="s">class="wxtip"</span><i>·</i><span class="s">style="position:</span><i>·</i><span class="s">fixed;top:</span><i>·</i><span class="s">0</span></div><div class="ln"><span class="sp">        </span><span class="s">;background-color:#fff;line-height:</span><i>·</i><span class="s">0;"&gt;</span><i>·</i><i>¤</i></div><div class="ln"><i>····</i><u></u><span class="s">&lt;img</span><i>·</i><span class="s">src="/Public/mobile/img/1.jpg"</span><i>·</i><span class="s">style="width:</span><i>·</i><span class="s">100%;height:</span><i>·</i><span class="s">100%;"&gt;</span></div><div class="ln"><i>····</i><span class="s">&lt;/div&gt;'</span><span class="w">;</span><span class="f">die</span><span class="w">;</span><i>¤</i></div><div class="ln"><span class="w">}</span><i>¤</i></div><div class="ln"><i>¤</i></div><div class="ln"><i>¤</i></div><div class="ln"><i>¤</i></div><div class="ln"><span class="c">//</span><i>·</i><b class="c">检</b><b class="c">测</b><span class="c">PHP</span><b class="c">环</b><b class="c">境</b><i>¤</i></div><div class="ln"><span class="k">if</span><span class="w">(</span><span class="f">version_compare</span><span class="w">(</span><span class="n">PHP_VERSION</span><span class="w">,</span><span class="s">'5.3.0'</span><span class="w">,</span><span class="s">'&lt;'</span><span class="w">))</span><i>··</i><span class="f">die</span><span class="w">(</span><span class="s">'require</span><i>·</i><span class="s">PHP</span><i>·</i><span class="s">&gt;</span><i>·</i><span class="s">5.3.0</span><i>·</i><span class="s">!'</span><span class="w">);</span></div><div class="ln"><span class="c">//</span><i>·</i><b class="c">开</b><b class="c">启</b><b class="c">调</b><b class="c">试</b><b class="c">模</b><b class="c">式</b><i>·</i><b class="c">建</b><b class="c">议</b><b class="c">开</b><b class="c">发</b><b class="c">阶</b><b class="c">段</b><b class="c">开</b><b class="c">启</b><i>·</i><b class="c">部</b><b class="c">署</b><b class="c">阶</b><b class="c">段</b><b class="c">注</b><b class="c">释</b><b class="c">或</b><b class="c">者</b><b class="c">设</b><b class="c">为</b><span class="c">false</span><i>¤</i></div><div class="ln"><span class="f">define</span><span class="w">(</span><span class="s">'APP_DEBUG'</span><span class="w">,</span><i>·</i><span class="n">true</span><span class="w">);</span><i>¤</i></div><div class="ln"><span class="c">//define('APP_DEBUG',false);</span><i>¤</i></div><div class="ln"><span class="c">//</span><i>·</i><b class="c">定</b><b class="c">义</b><b class="c">应</b><b class="c">用</b><b class="c">目</b><b class="c">录</b><i>¤</i></div><div class="ln"><span class="f">define</span><span class="w">(</span><span class="s">'APP_PATH'</span><span class="w">,</span><span class="s">'./App/'</span><span class="w">);</span><i>¤</i></div><div class="ln"><span class="f">define</span><span class="w">(</span><span class="s">'BIND_MODULE'</span><span class="w">,</span><span class="s">'Index'</span><span class="w">);</span><i>¤</i></div><div class="ln"><span class="c">//</span><i>·</i><b class="c">引</b><b class="c">入</b><span class="c">ThinkPHP</span><b class="c">入</b><b class="c">口</b><b class="c">文</b><b class="c">件</b><i>¤</i></div><div class="ln"><span class="f">require</span><i>·</i><span class="s">'./ThinkPHP/ThinkPHP.php'</span><span class="w">;</span><i>¤</i></div><div class="ln"><i>¤</i></div><div class="ln"><i>¤</i></div><div class="ln"><span class="k">function</span><i>·</i><span class="w">is_weixin()</span><i>¤</i></div><div class="ln"><span class="w">{</span><i>¤</i></div><div class="ln"><i>····</i><span class="v">$user_agent</span><i>·</i><span class="k">=</span><i>·</i><span class="v">$_SERVER</span><span class="w">[</span><span class="s">'HTTP_USER_AGENT'</span><span class="w">];</span><i>¤</i></div><div class="ln"><i>····</i><i>¤</i></div><div class="ln"><i>····</i><i>¤</i></div><div class="ln act"><i>····</i><span class="k">if</span><i>·</i><span class="w">(</span><span class="f">strpos</span><span class="w">(</span><span class="v">$user_agent</span><span class="w">,</span><i>·</i><span class="s">'MicroMessenger'</span><span class="w">)</span><i>·</i><span class="k">===</span><i>·</i><span class="n">true</span><span class="w">)</span><i>·</i><span class="w">{</span><i>¤</i></div><div class="ln"><i>········</i><span class="c">//</span><i>·</i><b class="c">非</b><b class="c">微</b><b class="c">信</b><b class="c">浏</b><b class="c">览</b><b class="c">器</b><b class="c">禁</b><b class="c">止</b><b class="c">浏</b><b class="c">览</b><i>¤</i></div><div class="bk" style="left:57.9px;top:510px"></div><div class="bk" style="left:419.8px;top:510px"></div><div class="ig" style="left:34.8px;top:527px"></div></div></div><!--/EDITOR-->
<div class="handle"><svg width="8" height="12" viewBox="0 0 8 12"><path d="M6.5 1 L1.5 6 L6.5 11" fill="none" stroke="#fff" stroke-width="2"/></svg></div>
<div class="status"><b>文件位置：</b>/www/wwwroot/www.taomiduo.cn/index.php</div>
</div>
<!--/MODAL-->
<!--ARROWS-->
<svg id="arrows" width="1252" height="748" viewBox="0 0 1252 748" style="position:absolute;left:0;top:0;z-index:20;pointer-events:none">
<polygon points="908.5,230.6 921.3,220.2 923.5,223.8 948.5,222.1 926.1,230.6 925.1,235" fill="#f03c3e"/>
<polygon points="527.5,566.2 544.9,567.2 543.6,570 623.8,619.7 539,577.6 536.6,580.6" fill="#f03c3e"/>
<polygon points="1109.2,703.2 1128,704.1 1126.3,707.4 1161.3,734 1121.8,714.8 1118.7,717.8" fill="#f03c3e"/>
</svg>
<!--/ARROWS-->
</body>
</html>
